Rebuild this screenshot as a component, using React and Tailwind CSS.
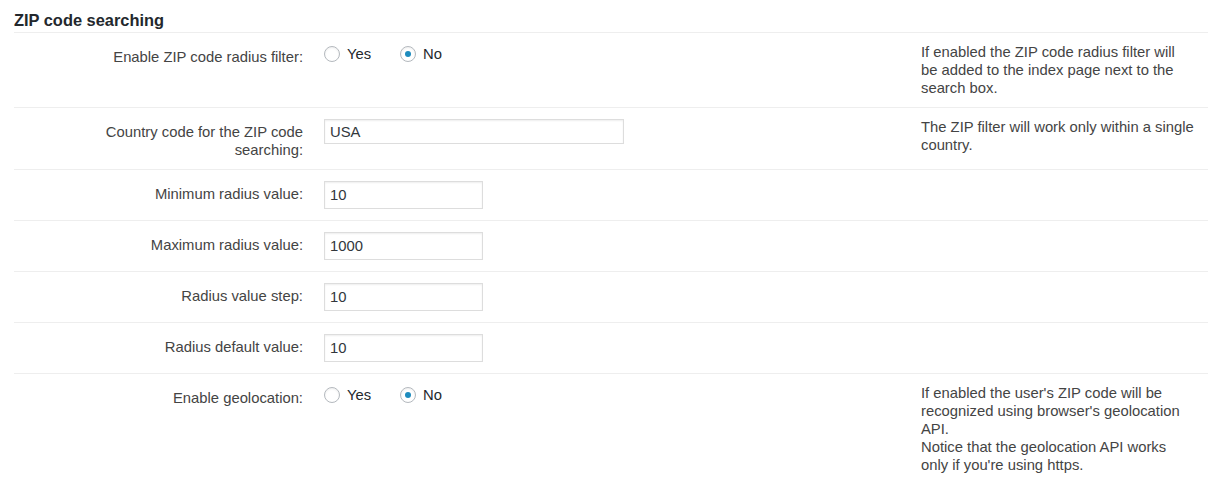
import React from 'react'

// ── Settings rows ────────────────────────────────────────────────────────────
const ROWS = [
  {
    label: 'Enable ZIP code radius filter:',
    type: 'radio',
    value: 'no',
    desc: [['If enabled the ZIP code radius filter will', 'be added to the index page next to the search box.']],
  },
  {
    label: 'Country code for the ZIP code searching:',
    type: 'wide',
    value: 'USA',
    desc: [['The ZIP filter will work only within a single country.']],
  },
  { label: 'Minimum radius value:', type: 'text', value: '10' },
  { label: 'Maximum radius value:', type: 'text', value: '1000' },
  { label: 'Radius value step:', type: 'text', value: '10' },
  { label: 'Radius default value:', type: 'text', value: '10' },
  {
    label: 'Enable geolocation:',
    type: 'radio',
    value: 'no',
    desc: [
      ["If enabled the user's ZIP code will be recognized using browser's geolocation API."],
      ['Notice that the geolocation API works', "only if you're using https."],
    ],
  },
]

function Radio({ checked, label, className = '' }) {
  return (
    <label className={`flex items-center h-[18px] ${className}`}>
      <span className="flex h-4 w-4 flex-shrink-0 items-center justify-center rounded-full border border-[#b4b9be] bg-white shadow-[inset_0_1px_2px_rgba(0,0,0,0.07)]">
        {checked && <span className="h-[6px] w-[6px] rounded-full bg-[#1e8cbe]" />}
      </span>
      <span className="ml-[7px] text-[#23282d]">{label}</span>
    </label>
  )
}

function Field({ row }) {
  if (row.type === 'radio') {
    return (
      <div className="flex pt-[12px]">
        <Radio checked={row.value === 'yes'} label="Yes" className="w-[76px]" />
        <Radio checked={row.value === 'no'} label="No" />
      </div>
    )
  }
  const width = row.type === 'wide' ? 'w-[300px] h-[25px]' : 'w-[159px] h-[28px]'
  return (
    <div className="pt-[11px] pb-[1px]">
      <input
        readOnly
        value={row.value}
        className={`${width} border border-[#ddd] bg-white px-[5px] text-[14.8px] text-[#32373c] shadow-[inset_0_1px_2px_rgba(0,0,0,0.07)] outline-none`}
      />
    </div>
  )
}

export default function App() {
  return (
    <div className="min-h-screen bg-white text-[14.8px] leading-[18px] text-[#444] font-['Liberation_Sans',Arial,sans-serif]">
      {/* ── Heading ─────────────────────────────────────────────────── */}
      <h2 className="ml-[14px] w-[1194px] border-b border-[#eee] pt-[10px] pb-[2px] text-[16.4px] font-bold leading-[20px] text-[#23282d]">
        ZIP code searching
      </h2>

      {/* ── Rows ────────────────────────────────────────────────────── */}
      <div className="ml-[14px] w-[1194px]">
        {ROWS.map((row, i) => (
          <div key={i} className={`flex pb-[10px] ${i > 0 ? 'border-t border-[#eee]' : ''}`}>
            <div className="w-[289px] flex-shrink-0 pt-[15px] pl-[80px] text-right">{row.label}</div>
            <div className="w-[618px] flex-shrink-0 pl-[21px]">
              <Field row={row} />
            </div>
            <div className="w-[280px] flex-shrink-0 pt-[10px]">
              {row.desc &&
                row.desc.map((lines, j) => (
                  <p key={j}>
                    {lines.map((l, k) => (
                      <React.Fragment key={k}>
                        {k > 0 && <br />}
                        {l}
                      </React.Fragment>
                    ))}
                  </p>
                ))}
            </div>
          </div>
        ))}
      </div>
    </div>
  )
}
